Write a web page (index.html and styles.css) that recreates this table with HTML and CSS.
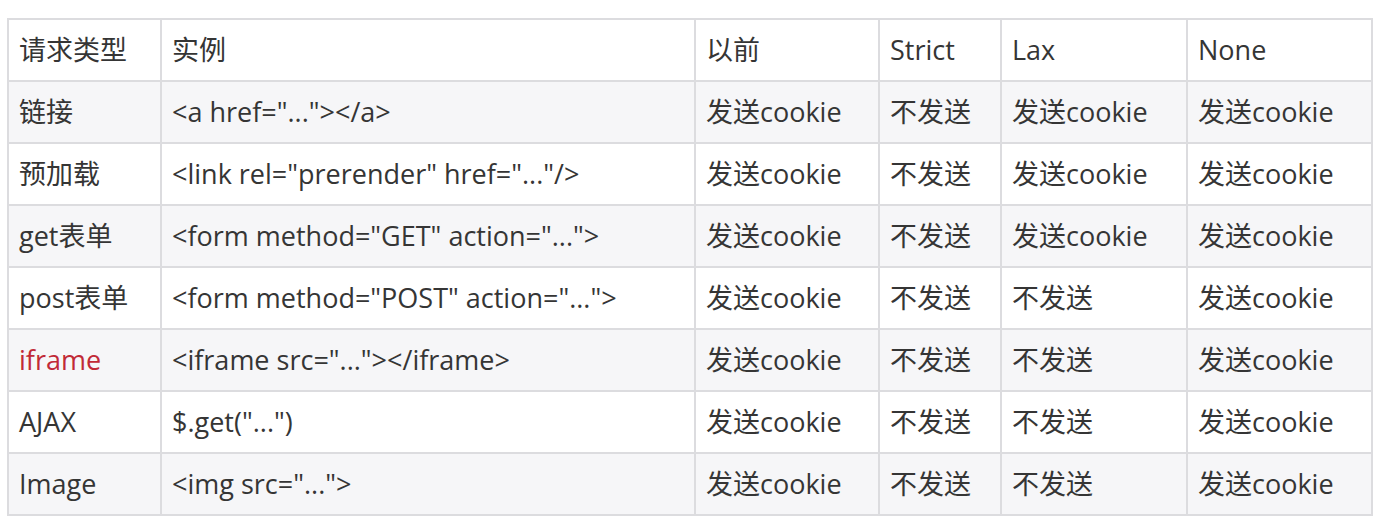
FILE: index.html
```html
<!DOCTYPE html>
<html lang="zh-CN">
<head>
<meta charset="utf-8">
<title>SameSite</title>
<link rel="stylesheet" href="styles.css">
</head>
<body>
<table class="grid">
  <colgroup>
    <col class="c1"><col class="c2"><col class="c3"><col class="c4"><col class="c5"><col class="c6">
  </colgroup>
  <thead>
    <tr><th>请求类型</th><th>实例</th><th>以前</th><th>Strict</th><th>Lax</th><th>None</th></tr>
  </thead>
  <tbody>
    <tr><td>链接</td><td>&lt;a href="..."&gt;&lt;/a&gt;</td><td>发送cookie</td><td>不发送</td><td>发送cookie</td><td>发送cookie</td></tr>
    <tr><td>预加载</td><td>&lt;link rel="prerender" href="..."/&gt;</td><td>发送cookie</td><td>不发送</td><td>发送cookie</td><td>发送cookie</td></tr>
    <tr><td>get表单</td><td>&lt;form method="GET" action="..."&gt;</td><td>发送cookie</td><td>不发送</td><td>发送cookie</td><td>发送cookie</td></tr>
    <tr><td>post表单</td><td>&lt;form method="POST" action="..."&gt;</td><td>发送cookie</td><td>不发送</td><td>不发送</td><td>发送cookie</td></tr>
    <tr><td class="red">iframe</td><td>&lt;iframe src="..."&gt;&lt;/iframe&gt;</td><td>发送cookie</td><td>不发送</td><td>不发送</td><td>发送cookie</td></tr>
    <tr><td>AJAX</td><td>$.get("...")</td><td>发送cookie</td><td>不发送</td><td>不发送</td><td>发送cookie</td></tr>
    <tr><td>Image</td><td>&lt;img src="..."&gt;</td><td>发送cookie</td><td>不发送</td><td>不发送</td><td>发送cookie</td></tr>
  </tbody>
</table>
</body>
</html>
```

FILE: styles.css
```css
html, body {
  margin: 0;
  background: #ffffff;
}
body {
  padding: 18px 0 0 7px;
  font-family: "Open Sans", "Noto Sans CJK SC", sans-serif;
  font-size: 27px;
  color: #353535;
}
.grid {
  border-collapse: collapse;
  table-layout: fixed;
  width: 1364px;
}
.c1 { width: 153px; }
.c2 { width: 534px; }
.c3 { width: 184px; }
.c4 { width: 122px; }
.c5 { width: 186px; }
.c6 { width: 185px; }
.grid th,
.grid td {
  border: 2px solid #dcdcdf;
  height: 60px;
  padding: 0 0 0 10px;
  text-align: left;
  font-weight: normal;
  white-space: nowrap;
  vertical-align: middle;
  line-height: 1.2;
}
.grid tbody tr:nth-child(odd) {
  background: #f6f6f8;
}
.red {
  color: #c12a37;
}
```
